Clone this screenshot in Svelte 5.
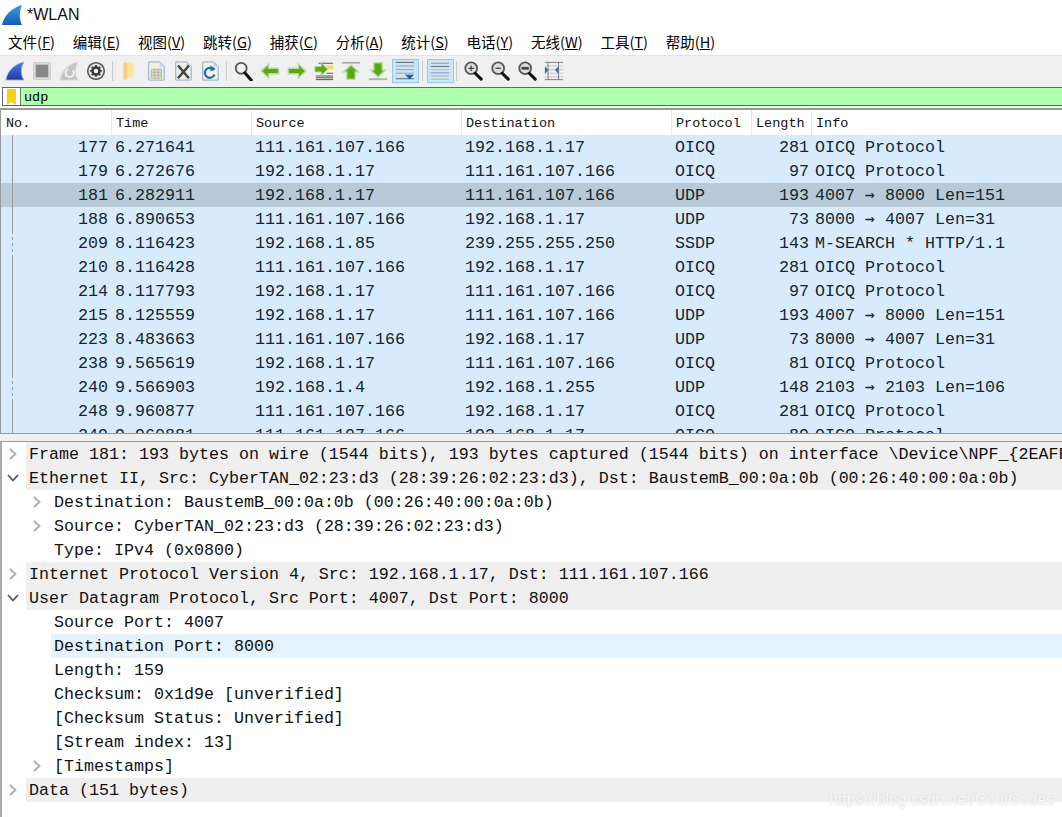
<script>
  const menus = [['文件','F'],['编辑','E'],['视图','V'],['跳转','G'],['捕获','C'],['分析','A'],['统计','S'],['电话','Y'],['无线','W'],['工具','T'],['帮助','H']];
  const columns = ['No.','Time','Source','Destination','Protocol','Length','Info'];
  const ipA='111.161.107.166', ipB='192.168.1.17', o='OICQ Protocol';
  const packets = [
    [177,'6.271641',ipA,ipB,'OICQ',281,o],
    [179,'6.272676',ipB,ipA,'OICQ',97,o],
    [181,'6.282911',ipB,ipA,'UDP',193,'4007 → 8000 Len=151'],
    [188,'6.890653',ipA,ipB,'UDP',73,'8000 → 4007 Len=31'],
    [209,'8.116423','192.168.1.85','239.255.255.250','SSDP',143,'M-SEARCH * HTTP/1.1'],
    [210,'8.116428',ipA,ipB,'OICQ',281,o],
    [214,'8.117793',ipB,ipA,'OICQ',97,o],
    [215,'8.125559',ipB,ipA,'UDP',193,'4007 → 8000 Len=151'],
    [223,'8.483663',ipA,ipB,'UDP',73,'8000 → 4007 Len=31'],
    [238,'9.565619',ipB,ipA,'OICQ',81,o],
    [240,'9.566903','192.168.1.4','192.168.1.255','UDP',148,'2103 → 2103 Len=106'],
    [248,'9.960877',ipA,ipB,'OICQ',281,o],
    [249,'9.960881',ipA,ipB,'OICQ',89,o]
  ];
  const details = [
    {t:'Frame 181: 193 bytes on wire (1544 bits), 193 bytes captured (1544 bits) on interface \\Device\\NPF_{2EAFF',l:0,a:'r',top:1},
    {t:'Ethernet II, Src: CyberTAN_02:23:d3 (28:39:26:02:23:d3), Dst: BaustemB_00:0a:0b (00:26:40:00:0a:0b)',l:0,a:'d',top:1},
    {t:'Destination: BaustemB_00:0a:0b (00:26:40:00:0a:0b)',l:1,a:'r'},
    {t:'Source: CyberTAN_02:23:d3 (28:39:26:02:23:d3)',l:1,a:'r'},
    {t:'Type: IPv4 (0x0800)',l:1},
    {t:'Internet Protocol Version 4, Src: 192.168.1.17, Dst: 111.161.107.166',l:0,a:'r',top:1},
    {t:'User Datagram Protocol, Src Port: 4007, Dst Port: 8000',l:0,a:'d',top:1},
    {t:'Source Port: 4007',l:1},
    {t:'Destination Port: 8000',l:1,sel:1},
    {t:'Length: 159',l:1},
    {t:'Checksum: 0x1d9e [unverified]',l:1},
    {t:'[Checksum Status: Unverified]',l:1},
    {t:'[Stream index: 13]',l:1},
    {t:'[Timestamps]',l:1,a:'r'},
    {t:'Data (151 bytes)',l:0,a:'r',top:1}
  ];
  const dashed = new Set([209,240]);
</script>

<div class="win">
  <header class="title">
    <svg width="20" height="20" viewBox="0 0 20 20">
      <defs><linearGradient id="tf" x1="0" y1="0" x2="0" y2="1"><stop offset="0" stop-color="#3f97e6"/><stop offset="1" stop-color="#0f5fb4"/></linearGradient></defs>
      <path d="M0 20 C2 11 9 3 20 0 C17 7 17 14 20 20 Z" fill="url(#tf)"/>
    </svg>
    <span>*WLAN</span>
  </header>
  <nav class="menu">
    {#each menus as [n,k]}
      <span class="mi">{n}(<u>{k}</u>)</span>
    {/each}
  </nav>
  <div class="tools">
    <svg class="ic" viewBox="0 0 22 22">
      <defs><linearGradient id="bf" x1="0" y1="0" x2="0" y2="1"><stop offset="0" stop-color="#4d7ede"/><stop offset="1" stop-color="#1f35a8"/></linearGradient></defs>
      <path d="M1 21 C2 12 10 3 21 1 C17 8 17 15 21 21 Z" fill="url(#bf)" stroke="#a8bad8"/>
    </svg>
    <svg class="ic" viewBox="0 0 22 22"><rect x="2" y="2" width="18" height="18" fill="#e4e4e4" stroke="#c0c0c0"/><rect x="4" y="4" width="14" height="14" fill="#878787"/></svg>
    <svg class="ic" viewBox="0 0 22 22"><path d="M1 21 C2 12 10 3 21 1 C17 8 17 15 21 21 Z" fill="#c4c4c4" stroke="#dcdcdc"/><path d="M15 10 A4.5 4.5 0 1 1 10 9" fill="none" stroke="#f4f4f4" stroke-width="2"/></svg>
    <svg class="ic" viewBox="0 0 22 22"><circle cx="11" cy="11" r="10" fill="#555"/><circle cx="11" cy="11" r="8.3" fill="#e2e2e2"/><circle cx="11" cy="11" r="5.3" fill="#3c3c3c"/><path d="M11 4.5 V17.5 M4.5 11 H17.5 M6.4 6.4 L15.6 15.6 M15.6 6.4 L6.4 15.6" stroke="#3c3c3c" stroke-width="1.8"/><circle cx="11" cy="11" r="2.5" fill="#f2f2f2"/></svg>
    <i class="sep"></i>
    <svg class="ic" viewBox="0 0 22 22"><path d="M5 2 H16 V19 L10 18 L5 21 Z" fill="#fde39e"/><path d="M5 2 H9 V20 L5 21 Z" fill="#f5cf7c"/></svg>
    <svg class="ic" viewBox="0 0 22 22"><path d="M3 1 H15 L20 6 V21 H3 Z" fill="#eef1e6" stroke="#7fa8cf"/><path d="M15 1 V6 H20 Z" fill="#bcd4e8"/><path d="M6 9 H17 V19 H6 Z M6 12.3 H17 M6 15.6 H17 M9.6 9 V19 M13.3 9 V19" fill="#dcdccc" stroke="#a8a89a" stroke-width=".8"/></svg>
    <svg class="ic" viewBox="0 0 22 22"><path d="M3 1 H15 L20 6 V21 H3 Z" fill="#eef1e6" stroke="#7fa8cf"/><path d="M15 1 V6 H20 Z" fill="#bcd4e8"/><path d="M5.5 5 L17.5 19 M17.5 5 L5.5 19" stroke="#444" stroke-width="2.8"/></svg>
    <svg class="ic" viewBox="0 0 22 22"><path d="M3 1 H15 L20 6 V21 H3 Z" fill="#eef1e6" stroke="#7fa8cf"/><path d="M15 1 V6 H20 Z" fill="#bcd4e8"/><path d="M15.5 10 A5.5 5.5 0 1 0 16 15" fill="none" stroke="#2a68b0" stroke-width="2.4"/><path d="M11.5 5 L17 8.5 L11.5 11.5 Z" fill="#2a68b0"/></svg>
    <i class="sep"></i>
    <svg class="ic" viewBox="0 0 22 22"><circle cx="9" cy="8" r="6" fill="#efefef" stroke="#555" stroke-width="2"/><path d="M13 13 L20 21" stroke="#111" stroke-width="3.4" stroke-linecap="round"/></svg>
    <svg class="ic" viewBox="0 0 22 22"><path d="M1.5 11 L9.5 3.5 V8 H20.5 V14 H9.5 V18.5 Z" fill="#5da80f" stroke="#b5d69c" stroke-width="1.5"/></svg>
    <svg class="ic" viewBox="0 0 22 22"><path d="M20.5 11 L12.5 3.5 V8 H1.5 V14 H12.5 V18.5 Z" fill="#5da80f" stroke="#b5d69c" stroke-width="1.5"/></svg>
    <svg class="ic" viewBox="0 0 22 22"><path d="M5 2.5 H21 M14 13.5 H21 M2 16.5 H21 M2 18.5 H21 M2 20.5 H21" stroke="#444"/><rect x="14" y="5" width="7" height="4" fill="#f5de50"/><path d="M15 9 L8 2 V6 H1 V12 H8 V16 Z" fill="#5da80f" stroke="#b5d69c"/></svg>
    <svg class="ic" viewBox="0 0 22 22"><rect x="1" y="1" width="20" height="2" fill="#b0b0b0"/><path d="M11 4.5 L19 12 H15.5 V20 H6.5 V12 H3 Z" fill="#5da80f" stroke="#b5d69c" stroke-width="1.5"/></svg>
    <svg class="ic" viewBox="0 0 22 22"><rect x="1" y="19" width="20" height="2" fill="#b0b0b0"/><path d="M11 17.5 L19 10 H15.5 V2 H6.5 V10 H3 Z" fill="#5da80f" stroke="#b5d69c" stroke-width="1.5"/></svg>
    <span class="on"><svg class="ic" viewBox="0 0 22 22"><path d="M1 1.5 H21" stroke="#555"/><path d="M1 5.5 H21 M1 9.5 H21 M1 13.5 H21" stroke="#999"/><path d="M1 19.5 H21" stroke="#555"/><path d="M11 15 H21 L16 20 Z" fill="#1a5cb0"/></svg></span>
    <i class="sep wide"></i>
    <span class="on"><svg class="ic" viewBox="0 0 22 22"><path d="M1 2.5 H21" stroke="#d87878"/><path d="M1 6 H21" stroke="#666"/><path d="M1 9.5 H21" stroke="#a8c860"/><path d="M1 13 H21" stroke="#a080c8"/><path d="M1 16.5 H21" stroke="#80c0c8"/><path d="M1 20 H21" stroke="#d8b060"/></svg></span>
    <i class="sep"></i>
    <svg class="ic" viewBox="0 0 22 22"><circle cx="9" cy="8" r="6.5" fill="#ddd" stroke="#555" stroke-width="2"/><path d="M6 8 H12 M9 5 V11" stroke="#444" stroke-width="1.4"/><path d="M13.5 13.5 L20 20" stroke="#111" stroke-width="3.4" stroke-linecap="round"/></svg>
    <svg class="ic" viewBox="0 0 22 22"><circle cx="9" cy="8" r="6.5" fill="#ddd" stroke="#555" stroke-width="2"/><path d="M6 8 H12" stroke="#444" stroke-width="1.4"/><path d="M13.5 13.5 L20 20" stroke="#111" stroke-width="3.4" stroke-linecap="round"/></svg>
    <svg class="ic" viewBox="0 0 22 22"><circle cx="9" cy="8" r="6.5" fill="#ddd" stroke="#555" stroke-width="2"/><rect x="5" y="6.5" width="8" height="3" fill="#444"/><path d="M13.5 13.5 L20 20" stroke="#111" stroke-width="3.4" stroke-linecap="round"/></svg>
    <svg class="ic" viewBox="0 0 22 22"><path d="M1 1.5 H21 M1 20.5 H21" stroke="#777"/><path d="M1 5.5 H21 M1 9.5 H21 M1 13.5 H21 M1 17.5 H21" stroke="#c4c4c4"/><path d="M4.5 1 V21 M16 1 V21" stroke="#777"/><path d="M1 6 L5 10 L1 14 Z M12 10 L16 6 V14 Z" fill="#2a70c0"/></svg>
  </div>
  <div class="filter">
    <span class="mark"><svg width="9" height="16" viewBox="0 0 9 16"><path d="M0 0 H9 V16 L4.5 13 L0 16 Z" fill="#f5d30e"/></svg></span>
    <span class="ftext">udp</span>
  </div>

  <section class="list">
    <div class="row head">
      {#each columns as c}<span class="hc">{c}</span>{/each}
    </div>
    {#each packets as p}
      <div class="row pk" class:cur={p[0]===181}>
        <i class="tree" class:dash={dashed.has(p[0])}></i>
        <span class="num">{p[0]}</span>
        <span class="time">{p[1]}</span>
        <span class="src">{p[2]}</span>
        <span class="dst">{p[3]}</span>
        <span class="pro">{p[4]}</span>
        <span class="len">{p[5]}</span>
        <span class="inf">
          {#if String(p[6]).includes('→')}{String(p[6]).split('→')[0]}<b class="arr">→</b>{String(p[6]).split('→')[1]}{:else}{p[6]}{/if}
        </span>
      </div>
    {/each}
  </section>
  <div class="gap"></div>

  <section class="detail">
    {#each details as d}
      <div class="dr" class:sub={d.l===1} class:top={d.top} class:sel={d.sel}>
        <span class="arrow">
          {#if d.a==='r'}<svg width="10" height="12" viewBox="0 0 10 12"><path d="M2 1 L7.5 6 L2 11" fill="none" stroke="#aaa" stroke-width="1.8"/></svg>
          {:else if d.a==='d'}<svg width="12" height="10" viewBox="0 0 12 10"><path d="M1 2 L6 7.5 L11 2" fill="none" stroke="#555" stroke-width="1.8"/></svg>{/if}
        </span>
        <span class="dt">{d.t}</span>
      </div>
    {/each}
    <span class="wm">https://blog.csdn.net/CoutCodes</span>
  </section>
</div>

<style>
  :global(body){margin:0;background:#fff}
  .win{width:1062px;height:817px;overflow:hidden;display:flex;flex-direction:column;background:#fff}
  .title{height:30px;display:flex;align-items:center;gap:5px;padding-left:2px;box-sizing:border-box;font:16px "Liberation Sans","Noto Sans CJK SC",sans-serif;color:#111}
  .menu{height:25px;display:flex;padding:0 0 2px 8px;gap:17.9px;align-items:center;font:14.5px "Noto Sans CJK SC","Liberation Sans",sans-serif;color:#000;box-sizing:border-box}
  .mi{white-space:nowrap}
  .tools{height:32px;background:#f0f0f0;border-top:1px solid #e4e4e4;box-sizing:border-box;display:flex;align-items:center;padding:0 0 2px 5px;gap:7px}
  .ic{width:20px;height:20px;flex:none;display:block}
  .sep{width:1px;height:20px;background:#ccc;flex:none;margin:0 -1px}
  .sep.wide{margin:0}
  .on{background:#cce4f7;border:1px solid #90c8f0;padding:1px 2.5px;margin:0 -3.5px;display:block;flex:none}
  .filter{height:19px;margin-left:2px;border-style:solid;border-color:#666;border-width:1px 0 1px 1px;background:#afffaf;display:flex;align-items:center;box-sizing:border-box}
  .mark{width:18px;height:100%;background:#fff;border-right:1px solid #777;display:flex;align-items:center;justify-content:center;box-sizing:border-box}
  .ftext{padding:1px 0 0 3px;font:13.5px "Liberation Mono",monospace;color:#000}
  .list{margin-top:2px;height:326px;flex:none;border-top:2px solid #999;border-left:1px solid #999;border-bottom:1px solid #999;box-sizing:border-box;overflow:hidden}
  .row{display:grid;grid-template-columns:110px 140px 210px 210px 80px 60px 1fr;position:relative}
  .head{height:25px;background:#fff;font:13.5px/27px "Liberation Mono",monospace;color:#111}
  .hc{padding-left:4px;border-left:1px solid #e8e8e8;box-sizing:border-box;white-space:nowrap}
  .hc:first-child{border-left:0;padding-left:5px}
  .tree{position:absolute;left:11px;top:0;bottom:0;width:1px;background:#999}
  .tree.dash{background:repeating-linear-gradient(#999 0 3px,transparent 3px 6px)}
  .pk{height:24px;background:#d8ebfd;font:16.67px/25px "Liberation Mono",monospace;color:#12272e;white-space:nowrap}
  .pk.cur{background:#b8cad8}
  .pk span{overflow:hidden}
  .num{text-align:right;padding-right:3px}
  .time,.src,.dst,.pro{padding-left:4px}
  .len{text-align:right;padding-right:2px}
  .inf{padding-left:4px}
  .arr{font-family:"DejaVu Sans Mono",monospace;font-weight:400;font-size:16.6px;line-height:0}
  .gap{height:7px;flex:none;background:#f0f0f0}
  .detail{flex:1;border-top:1px solid #999;border-left:2px solid #aaa;position:relative;overflow:hidden}
  .dr{height:24px;display:flex;align-items:center;font:16.67px/26px "Liberation Mono",monospace;color:#111;white-space:nowrap}
  .arrow{width:24px;flex:none;display:flex;justify-content:center;padding-right:2px;box-sizing:border-box}
  .dt{flex:1;padding-left:3px;height:100%}
  .top .dt{background:#efefef}
  .sub{padding-left:24px}
  .sub .dt{margin-left:1px}
  .sel .dt{background:#e5f3ff}
  .wm{position:absolute;right:8px;bottom:8px;font:15.8px "Liberation Sans",sans-serif;color:#f8f8f8;text-shadow:0 0 2px #d0d0d0}
</style>
